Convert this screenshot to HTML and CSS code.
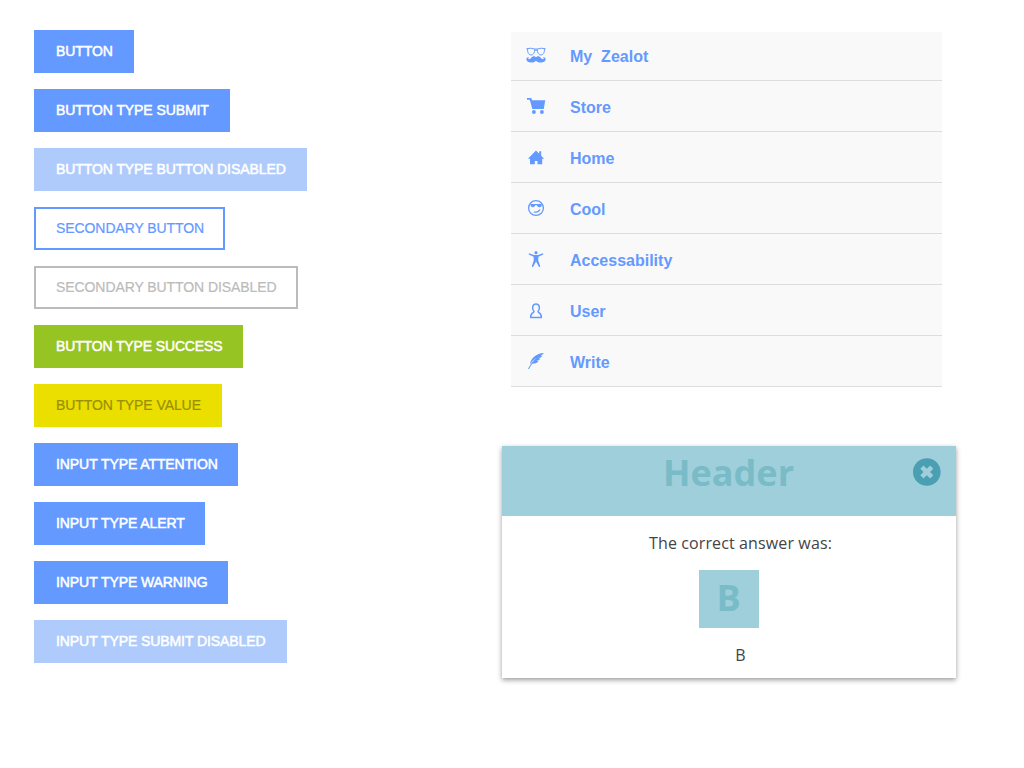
FILE: index.html
```html
<!DOCTYPE html>
<html lang="en">
<head>
<meta charset="utf-8">
<title>Components</title>
<link rel="stylesheet" href="styles.css">
</head>
<body>
<main class="page">
  <section class="buttons">
    <button class="btn w-100"><span>BUTTON</span></button>
    <button class="btn w-196" type="submit"><span>BUTTON TYPE SUBMIT</span></button>
    <button class="btn off w-273"><span>BUTTON TYPE BUTTON DISABLED</span></button>
    <button class="btn secondary w-191"><span>SECONDARY BUTTON</span></button>
    <button class="btn secondary-off w-264"><span>SECONDARY BUTTON DISABLED</span></button>
    <button class="btn success w-209"><span>BUTTON TYPE SUCCESS</span></button>
    <button class="btn value w-188"><span>BUTTON TYPE VALUE</span></button>
    <button class="btn w-204"><span>INPUT TYPE ATTENTION</span></button>
    <button class="btn w-171"><span>INPUT TYPE ALERT</span></button>
    <button class="btn w-194"><span>INPUT TYPE WARNING</span></button>
    <button class="btn off w-253"><span>INPUT TYPE SUBMIT DISABLED</span></button>
  </section>
  <section class="side">
    <ul class="menu">
      <li><svg class="icon" viewBox="0 -1 20 20"><g fill="none" stroke="currentColor" stroke-width=".95"><path d="M.4 2.8Q4.500 1.500 9 3.100Q10 2.600 11 3.100Q15.500 1.500 19.600 2.800M1.500 2.900Q1.400 9 5.100 9Q8.500 9 8.800 3.200M18.500 2.900Q18.600 9 14.900 9Q11.500 9 11.200 3.200M8.700 4.400Q10 3.600 11.300 4.400"/></g><path fill="currentColor" d="M10 11.300C8.500 9.700 6.500 10.300 5 12C3.700 13.500 2.300 13.700 2.400 12.400Q2.500 11.700 3.100 11.900C2.700 10.500.3 11.200.4 13.300C.6 16 3.600 17 6.300 16.500C8.300 16.100 9.400 15.500 10 14.400C10.600 15.500 11.700 16.100 13.700 16.500C16.400 17 19.400 16 19.600 13.300C19.700 11.200 17.300 10.500 16.900 11.900Q17.500 11.700 17.600 12.400C17.700 13.700 16.300 13.500 15 12C13.500 10.300 11.500 9.700 10 11.300Z"/></svg><span>My&nbsp; Zealot</span></li>
      <li><svg class="icon" viewBox="0 -1 20 20"><path fill="currentColor" d="M1 1H5.200L6.100 3.300H19.200L17.800 12H6.300L3.800 2.700H1Z"/><circle cx="7.900" cy="15" r="1.900" fill="currentColor"/><circle cx="15.900" cy="15" r="1.900" fill="currentColor"/></svg><span>Store</span></li>
      <li><svg class="icon" viewBox="0 -1 20 20"><path fill="currentColor" d="M10 2.500L13.200 5.700V3.200H15.200V7.700L18.200 10.700H16.200V16.200H11.500V13H8.800V16.200H4V10.700H1.900Z"/></svg><span>Home</span></li>
      <li><svg class="icon" viewBox="0 0 20 20"><circle cx="10" cy="10" r="7.400" fill="none" stroke="currentColor" stroke-width="1.300"/><path fill="currentColor" d="M4.300 6H15.700V7.600Q15.400 9.400 13.500 9.300Q11.300 9.400 10.900 7.300H9.200Q8.700 9.400 6.700 9.300Q4.700 9.200 4.300 6Z"/><path d="M8.200 14Q12.100 14.800 13.700 11.900" fill="none" stroke="currentColor" stroke-width="1.200" stroke-linecap="round"/></svg><span>Cool</span></li>
      <li><svg class="icon" viewBox="0 0 20 20"><circle cx="10" cy="3.700" r="1.600" fill="currentColor"/><path fill="currentColor" d="M3 4.200L8 6H12L17 4.200L17.300 5.500L12.400 7.700L12.200 11.200L14.400 17.800L13 18.100L10 12.400L7.100 18.100L5.700 17.800L7.800 11.200L7.600 7.700L2.700 5.500Z"/></svg><span>Accessability</span></li>
      <li><svg class="icon" viewBox="0 -1 20 20"><path d="M8 10.600C5.300 6.900 6.700 3 10 3S14.700 6.900 12 10.600C12.200 12 15.500 11.500 15.400 16.400H4.600C4.500 11.500 7.800 12 8 10.600Z" fill="none" stroke="currentColor" stroke-width="1.500" stroke-linejoin="round"/></svg><span>User</span></li>
      <li><svg class="icon" viewBox="0 0 20 20"><path fill="currentColor" d="M1.900 17.800Q4.400 12.200 10.500 6.700Q5.700 10.100 4.100 13.200C4.200 8.500 9.300 2.200 17.900 2Q16.900 3.900 14.700 4.700L16.400 4.900Q14.800 6.900 12.500 7.300L14.500 7.700Q12.900 9.500 10.400 9.700L12.600 10.200Q10.500 12.700 6.400 12.700Q4.500 14.600 3.100 18Z"/></svg><span>Write</span></li>
    </ul>
    <article class="card">
      <header class="card-head">
        <h2>Header</h2>
        <svg class="close" viewBox="0 0 28 28"><circle cx="13.800" cy="14" r="13.800" fill="#4a9fb3"/><path d="M8.900 9.100L18.700 18.900M18.700 9.100L8.900 18.900" stroke="#9fcfda" stroke-width="4.500"/></svg>
      </header>
      <div class="card-body">
        <p class="lead">The correct answer was:</p>
        <div class="tile">B</div>
        <p class="answer">B</p>
      </div>
    </article>
  </section>
</main>
</body>
</html>
```
FILE: styles.css
```css
* { box-sizing: border-box; }
body { margin: 0; background: #fff; font-family: "Liberation Sans", Arial, sans-serif; }
.page { display: flex; height: 768px; overflow: hidden; }
.buttons { width: 468px; padding: 30px 0 0 34px; display: flex; flex-direction: column; align-items: flex-start; gap: 16px; }
.btn { height: 43px; margin: 0; padding: 0 0 1px 20px; border: 2px solid #6499ff; background: #6499ff; color: #fff; font: 14px/18px "Liberation Sans", Arial, sans-serif; letter-spacing: -.08px; text-align: left; white-space: nowrap; -webkit-text-stroke: .5px currentColor; }
.off { background: #afcbfc; border-color: #afcbfc; }
.secondary { background: #fff; color: #6499ff; -webkit-text-stroke-width: .2px; }
.secondary-off { background: #fff; border-color: #bbb; color: #bbb; -webkit-text-stroke-width: .2px; }
.success { background: #95c423; border-color: #95c423; letter-spacing: -.14px; }
.value { background: #ebdf00; border-color: #ebdf00; color: #998f05; -webkit-text-stroke-width: .2px; }
.w-100 { width: 100px; }
.w-171 { width: 171px; }
.w-188 { width: 188px; }
.w-191 { width: 191px; }
.w-194 { width: 194px; }
.w-196 { width: 196px; }
.w-204 { width: 204px; }
.w-209 { width: 209px; }
.w-253 { width: 253px; }
.w-264 { width: 264px; }
.w-273 { width: 273px; }
.side { width: 454px; margin-left: 34px; padding-top: 32px; }
.menu { list-style: none; margin: 0 14px 59px 9px; padding: 0; background: #f9f9f9; color: #6499ff; font-size: 16px; font-weight: bold; }
.menu li { display: flex; align-items: center; height: 51px; padding: 3px 0 0 15px; border-bottom: 1px solid #ddd; }
.menu li:first-child { height: 49px; padding-top: 1px; }
.icon { width: 20px; height: 20px; margin: 0 24px 3px 0; }
.card { height: 232px; background: #fff; box-shadow: 0 2px 5px rgba(0,0,0,.4); font-family: "Open Sans", sans-serif; }
.card-head { position: relative; height: 70px; background: #9fcfda; }
.card-head h2 { margin: 0; padding-right: 1px; font-size: 36px; line-height: 54px; font-weight: bold; text-align: center; color: #7abbc8; }
.close { position: absolute; right: 15px; top: 12px; width: 28px; height: 28px; }
.card-body { display: flex; flex-direction: column; align-items: center; padding-top: 15px; color: #444; font-size: 16px; line-height: 24px; }
.card-body p { margin: 0 0 0 23px; }
.lead { letter-spacing: .12px; }
.tile { width: 60px; height: 58px; margin: 15px 0; padding-right: 1px; background: #9fcfda; color: #7abbc8; font-size: 36px; line-height: 56px; font-weight: bold; text-align: center; }
```
